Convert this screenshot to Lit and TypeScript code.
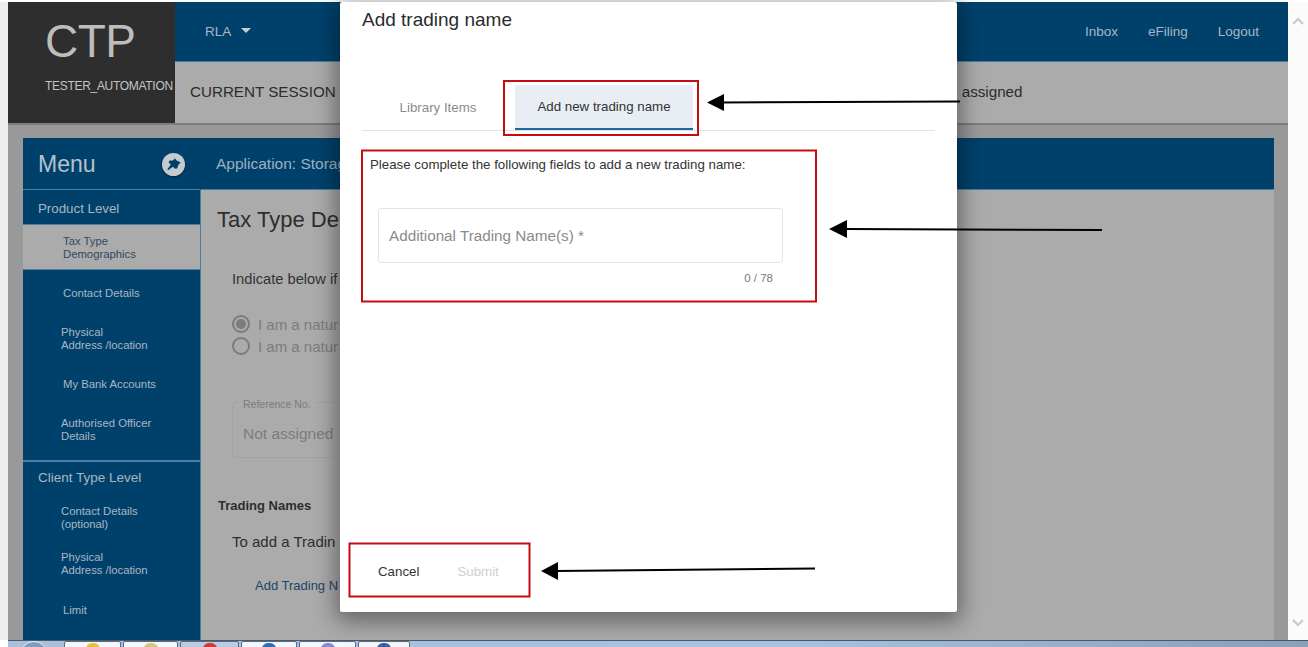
import { LitElement, html, css, svg } from "lit";
import { customElement } from "lit/decorators.js";

const menuA: string[][] = [["Tax Type", "Demographics"], ["Contact Details"], ["Physical", "Address /location"], ["My Bank Accounts"], ["Authorised Officer", "Details"]];
const menuB: string[][] = [["Contact Details", "(optional)"], ["Physical", "Address /location"], ["Limit"]];
const tasks = [
  { w: 57, icon: "#e8c040", on: false },
  { w: 55, icon: "#d8c488", on: false },
  { w: 59, icon: "#d23a32", on: true },
  { w: 56, icon: "#2a70b8", on: false },
  { w: 57, icon: "#8a88d8", on: false },
  { w: 52, icon: "#3a62a8", on: false },
];

@customElement("app-root")
export class AppRoot extends LitElement {
  static styles = css`
    :host { display: block; width: 1308px; height: 647px; position: relative; overflow: hidden; background: #fff; font-family: "Liberation Sans", Arial, sans-serif; color: #333; }
    * { box-sizing: border-box; }
    .screen { display: flex; flex-direction: column; height: 647px; padding-top: 2px; }
    .main { flex: 1; display: flex; min-height: 0; }
    .gutter { width: 8px; background: #eeeeee; }
    .page { flex: 1; min-width: 0; background: #999; display: flex; flex-direction: column; overflow: hidden; }
    .scroll { width: 20px; background: #fbfbfb; display: flex; flex-direction: column; justify-content: space-between; align-items: center; padding: 15px 0 13px; }
    .scroll svg { display: block; }
    .header { display: flex; height: 123px; flex: none; border-bottom: 2px solid #7d7d7d; }
    .logo { width: 167px; background: #2f2e2e; color: #bdbdbd; display: flex; flex-direction: column; }
    .logo b { font-weight: 400; font-size: 46px; line-height: 52px; margin: 13px 0 0 37px; letter-spacing: -0.5px; }
    .logo span { font-size: 12px; margin: 12px 0 0 37px; white-space: nowrap; letter-spacing: -0.3px; color: #c4c4c4; }
    .hright { flex: 1; display: flex; flex-direction: column; }
    .topbar { height: 60px; background: #00416c; border-bottom: 1px solid #4d7da0; color: #a9b6c2; display: flex; align-items: center; font-size: 13.5px; padding: 0 29px 0 30px; flex: none; }
    .rla { display: flex; align-items: center; gap: 10px; }
    .caret { width: 0; height: 0; border-left: 5px solid transparent; border-right: 5px solid transparent; border-top: 5px solid #c4ccd4; margin-top: -3px; }
    .links { margin-left: auto; display: flex; gap: 30px; }
    .session { flex: 1; background: #ababab; display: flex; align-items: center; font-size: 15.2px; color: #2c2c2c; padding: 0 0 2px 15px; white-space: nowrap; }
    .session .end { margin-left: 626px; }
    .body { flex: 1; min-height: 0; padding: 13px 14px 0 15px; }
    .panel { height: 100%; display: grid; grid-template-columns: 178px 1fr; grid-template-rows: 52px 1fr; }
    .mhead { background: #00416c; color: #b7c1ca; font-size: 23px; display: flex; align-items: center; justify-content: space-between; padding: 2px 15px 0 15px; border-right: 1px solid #0a3a5e; border-bottom: 1px solid #4d7da0; }
    .pin { display: block; filter: drop-shadow(0 1px 1px rgba(0,0,0,.5)); margin-top: -1px; }
    .ahead { background: #00416c; color: #9fb0bf; font-size: 15.5px; display: flex; align-items: center; padding-left: 15px; border-bottom: 1px solid #4d7da0; white-space: nowrap; }
    .menu { background: #00416c; color: #a9b6c2; border-right: 1px solid #4d7da0; display: flex; flex-direction: column; overflow: hidden; }
    .group { font-size: 13.3px; height: 35px; flex: none; padding: 11px 0 0 15px; border-bottom: 1px solid #4d7da0; }
    .group.b { font-size: 13.5px; height: 34px; padding: 8px 0 0 15px; border-bottom: 0; border-top: 2px solid #4d7da0; margin-top: 8px; }
    .item { height: 45.5px; flex: none; display: flex; flex-direction: column; justify-content: center; padding: 2px 0 0 40px; font-size: 11.3px; line-height: 13px; }
    .item.wide { height: 46px; }
    .item.tight { padding-left: 38px; }
    .item.active { background: #ababab; color: #2f4a62; border-bottom: 1px solid #4d7da0; height: 45px; }
    .content { background: #ababab; position: relative; overflow: hidden; padding: 17px 0 0 16px; color: #2e2e2e; }
    .h { font-size: 22px; line-height: 26px; white-space: nowrap; }
    .ind { font-size: 14.7px; line-height: 18px; margin: 37px 0 0 15px; white-space: nowrap; color: #333; }
    .radios { margin: 27px 0 0 15px; display: flex; flex-direction: column; gap: 4px; color: #7c7c7c; font-size: 15px; }
    .radio { display: flex; align-items: center; gap: 8px; height: 18px; white-space: nowrap; }
    .dot { width: 18px; height: 18px; border-radius: 50%; border: 2px solid #7c7c7c; display: flex; align-items: center; justify-content: center; }
    .dot i { width: 10px; height: 10px; border-radius: 50%; background: #7c7c7c; display: block; }
    .refbox { margin: 47px 0 0 15px; width: 300px; height: 56px; border: 1px solid #a2a2a2; border-radius: 4px; position: relative; padding: 22px 0 0 10px; font-size: 15.5px; color: #7c7c7c; white-space: nowrap; }
    .refbox label { position: absolute; left: 6px; top: -5px; background: #ababab; padding: 0 4px; font-size: 10.5px; line-height: 12px; }
    .tn { font-size: 13px; font-weight: 700; margin: 40px 0 0 1px; line-height: 16px; }
    .to { font-size: 15px; margin: 19px 0 0 15px; line-height: 18px; white-space: nowrap; }
    .add { font-size: 13px; color: #1d4468; margin: 27px 0 0 38px; line-height: 16px; white-space: nowrap; }
    .taskbar { height: 7px; flex: none; margin-left: 8px; background: linear-gradient(90deg, #a9c0dc 0, #a9c3e0 60%, #8a9fb8 100%); border-top: 1px solid #4a5a6a; display: flex; padding-left: 12px; overflow: hidden; }
    .orb { width: 28px; height: 28px; border-radius: 50%; border: 1px solid #e6eef6; background: #7e9cc0; flex: none; }
    .tasks { display: flex; gap: 2px; margin-left: 16px; }
    .task { height: 10px; background: #f3f6fa; border: 1px solid #5a6a7a; border-radius: 2px 2px 0 0; display: flex; justify-content: center; }
    .task.on { background: #b8cde4; }
    .task i { display: block; width: 14px; height: 6px; margin-top: 1px; border-radius: 7px 7px 0 0; }
    .modal { position: absolute; left: 340px; top: 2px; width: 617px; height: 610px; background: #fff; border-radius: 2px; box-shadow: 0 5px 22px 4px rgba(0,0,0,.42); display: flex; flex-direction: column; padding: 0 22px; }
    .modal h2 { font-weight: 400; font-size: 19px; line-height: 24px; margin: 6px 0 0; color: #2c2c2c; }
    .tabs { display: flex; margin-top: 53px; height: 46px; border-bottom: 1px solid #e2e2e2; flex: none; padding-left: 19px; }
    .tab { height: 45px; display: flex; align-items: center; justify-content: center; font-size: 13.3px; padding-bottom: 1px; }
    .tab.lib { width: 114px; color: #8c8c8c; margin-right: 20px; }
    .tab.sel { width: 178px; background: #e8eef4; color: #333; border-bottom: 2px solid #1a6aa0; }
    .form { flex: 1; display: flex; flex-direction: column; }
    .intro { font-size: 13.3px; line-height: 16px; margin: 26px 0 0 8px; color: #333; white-space: nowrap; }
    .field { margin: 35px 0 0 16px; width: 405px; height: 55px; border: 1px solid #e4e4e4; border-radius: 3px; display: flex; align-items: center; padding: 0 10px; font-size: 15.25px; color: #8a8a8a; }
    .count { width: 405px; margin: 8px 0 0 16px; text-align: right; padding-right: 10px; font-size: 11.5px; line-height: 14px; color: #7a7a7a; }
    .actions { margin-top: auto; display: flex; padding: 0 0 32px 16px; font-size: 13.3px; line-height: 16px; gap: 38px; }
    .cancel { color: #333; }
    .submit { color: #cfcfcf; }
    .annot { position: absolute; inset: 0; width: 1308px; height: 647px; pointer-events: none; }
  `;

  private renderItem(lines: string[], cls: string) {
    return html`<div class="item ${cls}">${lines.map((l) => html`<span>${l}</span>`)}</div>`;
  }

  render() {
    return html`
      <div class="screen">
        <div class="main">
          <div class="gutter"></div>
          <div class="page">
            <div class="header">
              <div class="logo"><b>CTP</b><span>TESTER_AUTOMATION</span></div>
              <div class="hright">
                <div class="topbar">
                  <div class="rla"><span>RLA</span><i class="caret"></i></div>
                  <div class="links"><span>Inbox</span><span>eFiling</span><span>Logout</span></div>
                </div>
                <div class="session"><span>CURRENT SESSION</span><span class="end">assigned</span></div>
              </div>
            </div>
            <div class="body">
              <div class="panel">
                <div class="mhead">
                  <span>Menu</span>
                  <svg class="pin" width="23" height="23" viewBox="0 0 24 24"><circle cx="12" cy="12" r="12" fill="#c4ccd2"/><path d="M13.500 5.500l1.500 2 4.500 2.500-2.500 2.500-1 3.500-2.500.5-2-2.200-5.300 3.700-.7-.7 3.700-5.300-2.400-2 1.200-2.300 3.500.2z" fill="#00416c"/></svg>
                </div>
                <div class="ahead">Application: Storag</div>
                <div class="menu">
                  <div class="group">Product Level</div>
                  ${menuA.map((m, i) => this.renderItem(m, `${i === 0 ? "active" : ""} ${i === 2 || i === 4 ? "tight" : ""}`))}
                  <div class="group b">Client Type Level</div>
                  ${menuB.map((m, i) => this.renderItem(m, `wide ${i < 2 ? "tight" : ""}`))}
                </div>
                <div class="content">
                  <div class="h">Tax Type De</div>
                  <div class="ind">Indicate below if</div>
                  <div class="radios">
                    <div class="radio"><span class="dot"><i></i></span>I am a natur</div>
                    <div class="radio"><span class="dot"></span>I am a natur</div>
                  </div>
                  <div class="refbox"><label>Reference No.</label>Not assigned</div>
                  <div class="tn">Trading Names</div>
                  <div class="to">To add a Tradin</div>
                  <div class="add">Add Trading N</div>
                </div>
              </div>
            </div>
          </div>
          <div class="scroll">
            <svg width="12" height="8" viewBox="0 0 12 8"><path d="M1 7l5-5 5 5" fill="none" stroke="#c8c8c8" stroke-width="2"/></svg>
            <svg width="12" height="8" viewBox="0 0 12 8"><path d="M1 1l5 5 5-5" fill="none" stroke="#c8c8c8" stroke-width="2"/></svg>
          </div>
        </div>
        <div class="taskbar">
          <div class="orb"></div>
          <div class="tasks">
            ${tasks.map((t) => html`<div class="task ${t.on ? "on" : ""}" style="width:${t.w}px"><i style="background:${t.icon}"></i></div>`)}
          </div>
        </div>
      </div>

      <div class="modal">
        <h2>Add trading name</h2>
        <div class="tabs">
          <div class="tab lib">Library Items</div>
          <div class="tab sel">Add new trading name</div>
        </div>
        <div class="form">
          <div class="intro">Please complete the following fields to add a new trading name:</div>
          <div class="field">Additional Trading Name(s) *</div>
          <div class="count">0 / 78</div>
          <div class="actions"><span class="cancel">Cancel</span><span class="submit">Submit</span></div>
        </div>
      </div>

      <svg class="annot" viewBox="0 0 1308 647">
        ${svg`
          <g fill="none" stroke="#c40d12" stroke-width="2">
            <rect x="504" y="81" width="194" height="54"/>
            <rect x="362" y="150.500" width="454" height="151"/>
            <rect x="349.500" y="543.500" width="180" height="53"/>
          </g>
          <g fill="none" stroke="#000" stroke-width="2">
            <path d="M720 102.500L960 101.500"/>
            <path d="M845 229L1102 230"/>
            <path d="M555 571L815 568.500"/>
          </g>
          <g fill="#000">
            <path d="M707 102.500L724 94V111z"/>
            <path d="M829 229L847 220V238z"/>
            <path d="M541 571L558 562V580z"/>
          </g>
        `}
      </svg>
    `;
  }
}
